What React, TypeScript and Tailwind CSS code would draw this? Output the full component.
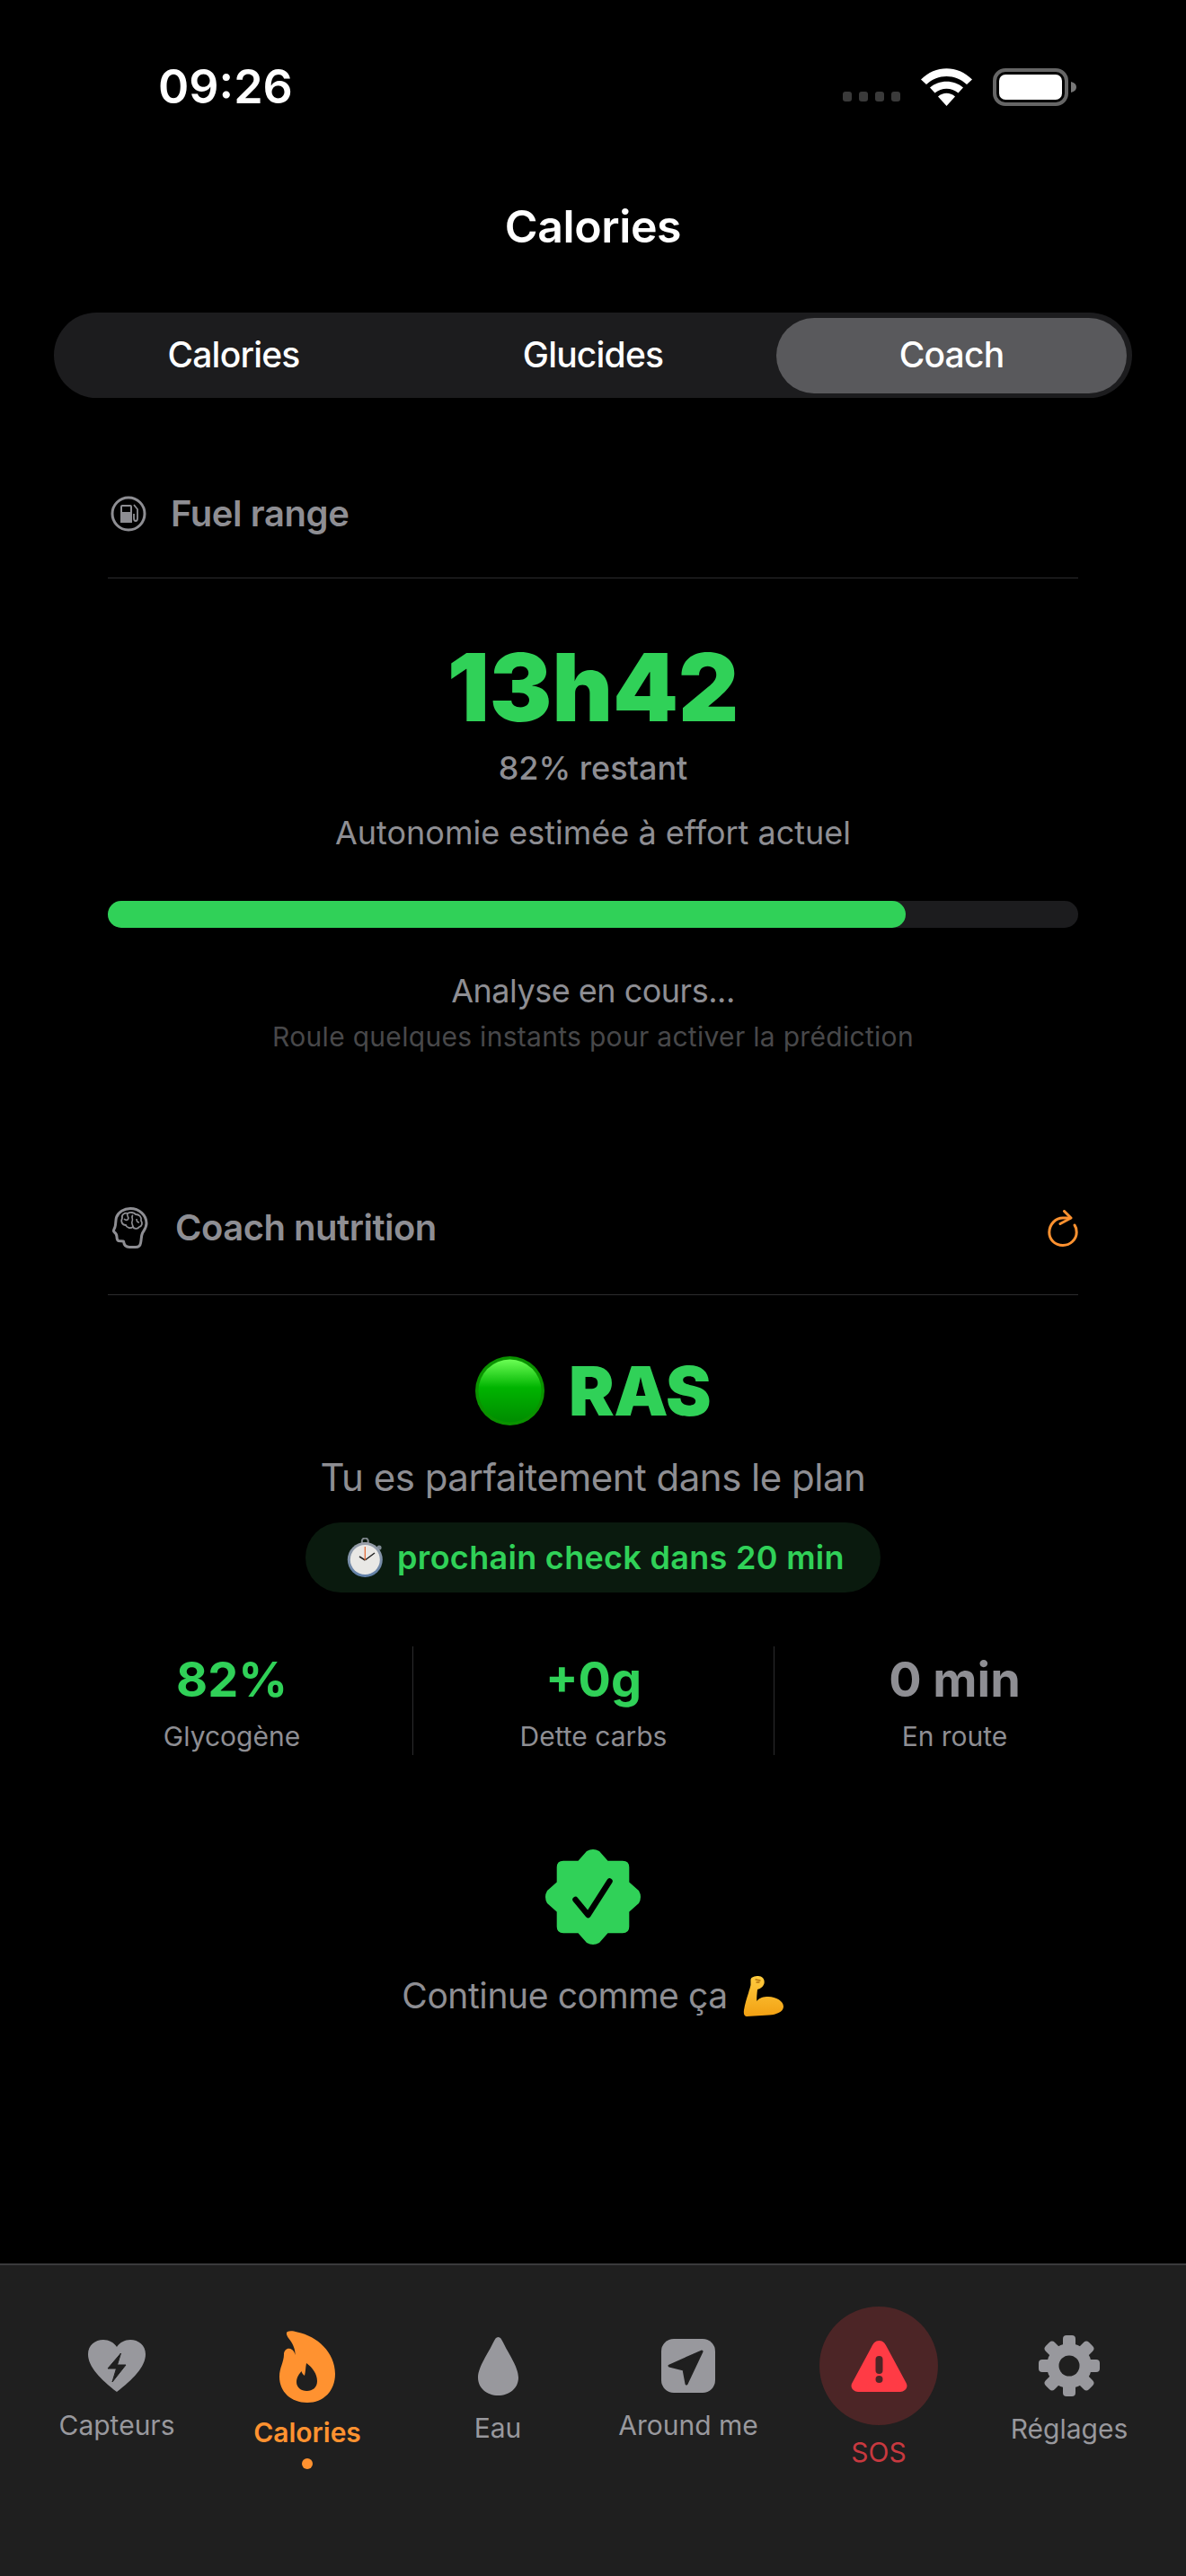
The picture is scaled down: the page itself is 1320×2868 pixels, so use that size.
export default function App() {
  return (
    <div className="w-[1320px] h-[2868px] bg-black flex flex-col overflow-hidden font-[Inter,sans-serif] text-[#8e8e93]">
      <div className="flex-1">
        <StatusBar />
        <h1 className="h-[116px] flex items-center justify-center text-[50px] font-semibold tracking-[-0.4px] text-white">Calories</h1>

        {/* Segmented control */}
        <div className="mt-[38px] mx-[60px] h-[95px] rounded-[48px] bg-[#1c1c1e] grid grid-cols-3 items-center text-[39px] font-medium tracking-[-0.8px] text-white">
          <div className="text-center">Calories</div>
          <div className="text-center">Glucides</div>
          <div className="ml-[4px] mr-[6px] h-[84px] rounded-[42px] bg-[#59595c] flex items-center justify-center">Coach</div>
        </div>

        <div className="px-[120px]">
          {/* Fuel range */}
          <div className="mt-[79px] h-[122px] pb-[22px] flex items-center border-b border-[#2c2c2e]">
            <FuelIcon />
            <span className="ml-[27px] text-[40px] font-semibold tracking-[-0.4px]">Fuel range</span>
          </div>
          <div className="mt-[71px] h-[100px] leading-[100px] text-center text-[104px] font-black text-[#30d158]">13h42</div>
          <div className="mt-[20px] h-[40px] leading-[40px] text-center text-[36px] font-medium">82% restant</div>
          <div className="mt-[30px] h-[44px] leading-[44px] text-center text-[36px]">Autonomie estimée à effort actuel</div>
          <div className="mt-[54px] h-[30px] rounded-full bg-[#1c1c1e]">
            <div className="h-full w-[82.2%] rounded-full bg-[#30d158]" />
          </div>
          <div className="mt-[48px] h-[44px] leading-[44px] text-center text-[36px] tracking-[-0.5px]">Analyse en cours...</div>
          <div className="mt-[11px] h-[36px] leading-[36px] text-center text-[30px] tracking-[0.3px] text-[#48484a]">Roule quelques instants pour activer la prédiction</div>

          {/* Coach nutrition */}
          <div className="mt-[143px] h-[127px] pb-[22px] flex items-center justify-between border-b border-[#2c2c2e]">
            <div className="flex items-center">
              <BrainIcon />
              <span className="ml-[30px] text-[40px] font-semibold tracking-[-0.5px]">Coach nutrition</span>
            </div>
            <RefreshIcon />
          </div>
          <div className="mt-[66px] h-[80px] flex items-center justify-center gap-[27px]">
            <GreenDot />
            <span className="text-[76px] font-black leading-[80px] tracking-[-0.5px] text-[#30d158]">RAS</span>
          </div>
          <div className="mt-[32px] h-[50px] leading-[50px] text-center text-[42px] tracking-[-0.5px]">Tu es parfaitement dans le plan</div>
          <div className="mt-[25px] mx-auto w-[640px] h-[78px] pl-[6px] rounded-[39px] bg-[#0a1a0e] flex items-center justify-center gap-[16px]">
            <Stopwatch />
            <span className="text-[36px] font-semibold tracking-[0.3px] text-[#30d158]">prochain check dans 20 min</span>
          </div>

          {/* Stats */}
          <div className="mt-[60px] -mx-[63px] h-[121px] grid grid-cols-3">
            <Stat value="82%" label="Glycogène" color="text-[#30d158]" />
            <Stat value="+0g" label="Dette carbs" color="text-[#30d158]" border />
            <Stat value="0 min" label="En route" color="text-[#8e8e93]" border />
          </div>

          <div className="mt-[105px] flex justify-center">
            <Seal />
          </div>
          <div className="mt-[32px] h-[50px] flex items-center justify-center gap-[17px] text-[39px] tracking-[-0.4px]">
            <span className="leading-[50px]">Continue comme ça</span>
            <Biceps />
          </div>
        </div>
      </div>

      <BottomNav />
    </div>
  );
}

function Stat({ value, label, color, border }: { value: string; label: string; color: string; border?: boolean }) {
  return (
    <div className={border ? 'pt-[5px] text-center border-l border-[#2c2c2e]' : 'pt-[5px] text-center'}>
      <div className={`h-[64px] leading-[64px] text-[54px] font-bold ${color}`}>{value}</div>
      <div className="mt-[11px] h-[40px] leading-[40px] text-[30px]">{label}</div>
    </div>
  );
}

function StatusBar() {
  return (
    <div className="h-[194px] flex items-center justify-between pl-[176px] pr-[122px]">
      <span className="text-[52px] font-semibold text-white">09:26</span>
      <div className="flex items-end">
        <div className="flex gap-[8px] mr-[23px] mb-[5px]">
          <div className="w-[10px] h-[11px] rounded-[3px] bg-[#3a3a3a]" />
          <div className="w-[10px] h-[11px] rounded-[3px] bg-[#3a3a3a]" />
          <div className="w-[10px] h-[11px] rounded-[3px] bg-[#3a3a3a]" />
          <div className="w-[10px] h-[11px] rounded-[3px] bg-[#3a3a3a]" />
        </div>
        <svg width="57" height="42" viewBox="0 0 57 42" className="mr-[23px]">
          <path d="M28.5 42 L19 31.5 C24.5 26.5 32.5 26.5 38 31.5Z" fill="#fff" />
          <path d="M10 21.5 C20 12.5 37 12.5 47 21.5 L41.5 27.5 C34 21 23 21 15.5 27.5Z" fill="#fff" />
          <path d="M0 12.5 C16 -4 41 -4 57 12.5 L51 18 C38 6 19 6 6 18Z" fill="#fff" />
        </svg>
        <svg width="93" height="42" viewBox="0 0 93 42">
          <rect x="2" y="2" width="80" height="38" rx="12" fill="none" stroke="#666" strokeWidth="4" />
          <rect x="7" y="7" width="70" height="28" rx="7" fill="#fff" />
          <path d="M87 15 C91 16 93 18 93 21 C93 24 91 26 87 27Z" fill="#777" />
        </svg>
      </div>
    </div>
  );
}

function FuelIcon() {
  return (
    <svg width="40" height="40" viewBox="0 0 40 40" className="ml-[3px]">
      <circle cx="20" cy="20" r="18" fill="none" stroke="#8e8e93" strokeWidth="3" />
      <path d="M11 12 Q11 10 13 10 L22 10 Q24 10 24 12 L24 30 L11 30Z M13 12 L13 18 L22 18 L22 12Z" fill="#8e8e93" fillRule="evenodd" />
      <path d="M26 10 L30 15 L30 25 Q30 28 28 28 Q26 28 26 25 L26 20" fill="none" stroke="#8e8e93" strokeWidth="1.8" />
    </svg>
  );
}

function BrainIcon() {
  return (
    <svg width="41" height="46" viewBox="0 0 41 46" fill="none" stroke="#8e8e93" className="ml-[4px]">
      <path d="M21 1.5 C31 1.5 39 9 39 18 C39 23 36 26 34.5 29 C33 32 33.5 36 32.5 40 C32 43 30 44.5 27 44.5 L20 44.5 C16 44.5 14 42 13.5 38 L8 37.5 C6.5 37 6 35 6 33 C6 31 5 29 3 27.5 C1.5 26 3 25 4 22 C5 19.5 4.5 15 5.5 11.5 C7.5 5.5 14 1.5 21 1.5Z" strokeWidth="3" strokeLinejoin="round" />
      <path d="M12 12 C11 8 15 6 18 7 C21 5 25 6 27 8 C31 8 34 11 33 15 C35 18 34 21 31 22 C29 25 25 24 24 22 C21 24 17 23 16 20 C12 20 10 16 12 12Z" strokeWidth="1.8" />
      <path d="M18 7 C16 10 21 11 18 14 C16 15 15 14 14 13 M24 9 C21 11 25 13 23 16 C22 18 24 20 24 22 M28 13 C28 15 29 17 31 17" strokeWidth="1.6" />
    </svg>
  );
}

function RefreshIcon() {
  return (
    <svg width="34" height="41" viewBox="0 0 34 41" fill="none" stroke="#ff9230" strokeWidth="3" strokeLinecap="round" strokeLinejoin="round">
      <path d="M30 17 C31.5 19 32.2 22 32.2 25 C32.2 33 25 39.5 17 39.5 C8 39.5 1.8 33 1.8 25 C1.8 16 9 9 17 9 L25 9" />
      <path d="M18.5 1.5 L26 9 L14 15.5" />
    </svg>
  );
}

function GreenDot() {
  return (
    <svg width="77" height="77" viewBox="0 0 77 77">
      <defs>
        <linearGradient id="greenDot" x1="0" y1="0" x2="0" y2="1">
          <stop offset="0" stopColor="#6cff55" />
          <stop offset="0.45" stopColor="#00b400" />
          <stop offset="1" stopColor="#008c00" />
        </linearGradient>
      </defs>
      <circle cx="38.5" cy="38.5" r="38.5" fill="#0a9200" />
      <circle cx="38.5" cy="38.5" r="35" fill="url(#greenDot)" />
    </svg>
  );
}

function Stopwatch() {
  return (
    <svg width="40" height="45" viewBox="12 12 40 45">
      <defs>
        <linearGradient id="bezel" x1="0" y1="0" x2="0" y2="1">
          <stop offset="0" stopColor="#9aa0a8" />
          <stop offset="1" stopColor="#5f7fa8" />
        </linearGradient>
      </defs>
      <circle cx="32.3" cy="16" r="3.5" fill="none" stroke="#7f868c" strokeWidth="2" />
      <circle cx="48" cy="23" r="2.6" fill="#7f8a94" />
      <circle cx="32.3" cy="36.5" r="19.5" fill="url(#bezel)" />
      <circle cx="32.3" cy="36.5" r="16.5" fill="#e9e8e5" />
      <path d="M32.3 37 L43 29" stroke="#222" strokeWidth="1.5" />
      <path d="M32.3 37 L26 33" stroke="#222" strokeWidth="1.5" />
      <path d="M32.3 37 L32.3 22" stroke="#e2622b" strokeWidth="1.2" />
    </svg>
  );
}

function Seal() {
  return (
    <svg width="106" height="106" viewBox="0 0 106 106">
      <path d="M46 2 Q53 -2 60 2 L69.5 12.7 L86 12.7 Q93.3 12.7 93.3 20 L93.3 36.5 L104 46 Q108 53 104 60 L93.3 69.5 L93.3 86 Q93.3 93.3 86 93.3 L69.5 93.3 L60 104 Q53 108 46 104 L36.5 93.3 L20 93.3 Q12.7 93.3 12.7 86 L12.7 69.5 L2 60 Q-2 53 2 46 L12.7 36.5 L12.7 20 Q12.7 12.7 20 12.7 L36.5 12.7Z" fill="#30d158" />
      <path d="M33.5 56 L47.5 73 L71.5 35.5" fill="none" stroke="#000" strokeWidth="6.5" strokeLinecap="round" strokeLinejoin="round" />
    </svg>
  );
}

function Biceps() {
  return (
    <svg width="46" height="47" viewBox="13 8 46 47">
      <defs>
        <linearGradient id="arm" x1="0" y1="0" x2="0" y2="1">
          <stop offset="0" stopColor="#ffcc40" />
          <stop offset="1" stopColor="#f2a012" />
        </linearGradient>
      </defs>
      <path d="M21.5 13 C22 10 26 9 30 9 C34 9 37 12 36.7 16 C36.5 20 33 23 29 24 C28.5 29 28 33 28.3 37 C31 33 36 32 41 32 C50 32 58 37 58 43 C58 49 50 52 42 52.5 L17 54 C14 54 13.5 50 14 47 C15 40 17 34 19 28 C20 24 21 22 21.5 19Z" fill="url(#arm)" />
      <path d="M27 13 L32 14 M28 16 L31 16" fill="none" stroke="#b5730c" strokeWidth="1.3" strokeLinecap="round" />
    </svg>
  );
}

function BottomNav() {
  const label = 'text-[30px] leading-[40px] h-[40px] text-[#98989d]';
  return (
    <nav className="h-[348px] bg-[#1f1f1f] border-t-2 border-[#3a3a3c] px-[24px] grid grid-cols-6 items-start">
      <div className="flex flex-col items-center pt-[83px]">
        <svg width="64" height="58" viewBox="0 0 64 58">
          <path d="M32 58 C14 44 0 30 0 16 C0 6 8 0 17 0 C23 0 29 3 32 8 C35 3 41 0 47 0 C56 0 64 6 64 16 C64 30 50 44 32 58Z" fill="#98989d" />
          <path d="M36.5 15 L22 32 L31.5 32 L27 47 L42 28 L32.5 28Z" fill="#1f1f1f" stroke="#1f1f1f" strokeWidth="1" strokeLinejoin="round" />
        </svg>
        <div className={`mt-[17px] ${label}`}>Capteurs</div>
      </div>

      <div className="flex flex-col items-center pt-[73px]">
        <svg width="62" height="80" viewBox="0 0 62 80">
          <path d="M9 1 C11 0 15 0 20 1.5 C42 6 62 24 62 48 C62 67 49 80 31 80 C13 80 0 68 0 51 C0 41 5 35 5 26 C5 21 10 18 14 21 C17 23 17.5 27 17.5 27 C18 20 14 13 10 8 C8 5 7 2 9 1Z" fill="#ff9230" />
          <path d="M30 36 C37 41 42 48 42 56 C42 63 37 67 30.5 67 C24 67 19 63 19 57 C19 52 22 48 24.5 45 C25 47 26.5 49 28 50 C29 46 29 41 30 36Z" fill="#1f1f1f" />
        </svg>
        <div className="mt-[13px] h-[40px] leading-[40px] text-[30px] font-semibold text-[#ff9230]">Calories</div>
        <div className="mt-[9px] w-[12px] h-[12px] rounded-full bg-[#ff9230]" />
      </div>

      <div className="flex flex-col items-center pt-[80px]">
        <svg width="45" height="65" viewBox="0 0 45 65">
          <path d="M22.5 0 C25 0 26 2 28 6 C33 17 45 33 45 45 C45 57 35 65 22.5 65 C10 65 0 57 0 45 C0 33 12 17 17 6 C19 2 20 0 22.5 0Z" fill="#98989d" />
        </svg>
        <div className={`mt-[16px] ${label}`}>Eau</div>
      </div>

      <div className="flex flex-col items-center pt-[82px]">
        <svg width="60" height="60" viewBox="0 0 60 60">
          <rect width="60" height="60" rx="14" fill="#98989d" />
          <path d="M45 14 L9 30 L25 34 L28 50Z" fill="#1f1f1f" stroke="#1f1f1f" strokeWidth="3" strokeLinejoin="round" />
        </svg>
        <div className={`mt-[16px] ${label} whitespace-nowrap`}>Around me</div>
      </div>

      <div className="flex flex-col items-center pt-[46px]">
        <div className="w-[132px] h-[132px] rounded-full bg-[#4c2526] flex items-center justify-center">
          <svg width="63" height="57" viewBox="0 0 63 57">
            <path d="M31.5 0 C36 0 38 3 40 7 L61 46 C65 52 60 57 55 57 L8 57 C3 57 -2 52 2 46 L23 7 C25 3 27 0 31.5 0Z" fill="#ff3b45" />
            <rect x="27.5" y="17" width="8" height="20" rx="4" fill="#4c2526" />
            <circle cx="31.5" cy="43" r="4" fill="#4c2526" />
          </svg>
        </div>
        <div className="mt-[10px] h-[40px] leading-[40px] text-[30px] text-[#c8393f]">SOS</div>
      </div>

      <div className="flex flex-col items-center pt-[78px]">
        <svg width="68" height="68" viewBox="0 0 68 68">
          <g fill="#98989d">
            <rect x="27" y="0" width="14" height="68" rx="4" />
            <rect x="27" y="0" width="14" height="68" rx="4" transform="rotate(45 34 34)" />
            <rect x="27" y="0" width="14" height="68" rx="4" transform="rotate(90 34 34)" />
            <rect x="27" y="0" width="14" height="68" rx="4" transform="rotate(135 34 34)" />
            <circle cx="34" cy="34" r="25" />
          </g>
          <circle cx="34" cy="34" r="11.5" fill="#1f1f1f" />
        </svg>
        <div className={`mt-[16px] ${label}`}>Réglages</div>
      </div>
    </nav>
  );
}
